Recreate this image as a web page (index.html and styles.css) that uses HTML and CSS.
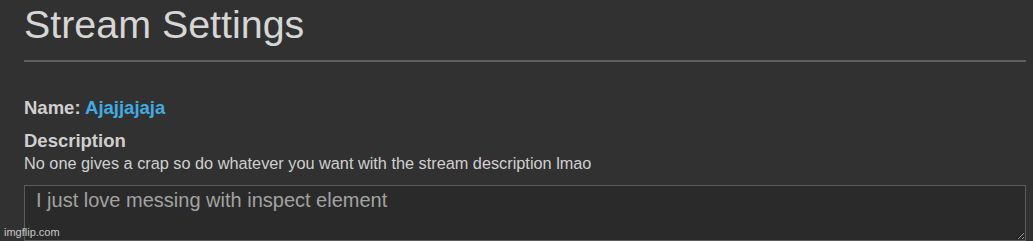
FILE: index.html
```html
<!DOCTYPE html>
<html>
<head lang="en">
  <meta charset="UTF-8">
  <title>Stream Settings</title>
  <link rel="stylesheet" href="styles.css">
</head>
<body>

<div class="settings_div">
  <h1 class="page_title">Stream Settings</h1>
  <hr class="title_rule">

  <div class="field_name"><b>Name:</b> <span class="stream_name">Ajajjajaja</span></div>

  <label class="field_label" for="description">Description</label>
  <p class="field_hint">No one gives a crap so do whatever you want with the stream description lmao</p>
  <textarea id="description" class="description_box">I just love messing with inspect element</textarea>
</div>

<span class="watermark">imgflip.com</span>

</body>
</html>
```

FILE: styles.css
```css
body {
  margin: 0;
  font-family: "Liberation Sans", Arial, Helvetica, sans-serif;
  background-color: #313131;
  color: #d2d2d2;
  overflow: hidden;
}

.settings_div {
  padding: 1px 7px 0 24px;
}

.page_title {
  margin: 0;
  font-size: 39.4px;
  line-height: 46px;
  font-weight: normal;
  color: #d6d6d6;
}

.title_rule {
  margin: 13px 0 0 0;
  border: none;
  height: 2px;
  background: #5e5e5e;
}

.field_name {
  margin-top: 35px;
  font-size: 18.5px;
  line-height: 22px;
  font-weight: bold;
  color: #cfcfcf;
}

.stream_name {
  color: #42abe3;
}

.field_label {
  display: block;
  margin-top: 11px;
  font-size: 18.5px;
  line-height: 22px;
  font-weight: bold;
  color: #cfcfcf;
}

.field_hint {
  margin: 2px 0 0 0;
  font-size: 16.3px;
  line-height: 19px;
  color: #d0d0d0;
}

.description_box {
  display: block;
  box-sizing: border-box;
  width: 100%;
  height: 56px;
  margin-top: 12px;
  padding: 3px 11px;
  border: 1px solid #5c5c5c;
  border-radius: 0;
  background: #2a2a2a;
  color: #a2a2a2;
  font-family: "Liberation Sans", Arial, Helvetica, sans-serif;
  font-size: 20px;
  outline: none;
  resize: vertical;
}

.watermark {
  position: absolute;
  left: 4px;
  bottom: 3px;
  font-size: 11px;
  color: rgba(230, 230, 230, 0.85);
}
```
